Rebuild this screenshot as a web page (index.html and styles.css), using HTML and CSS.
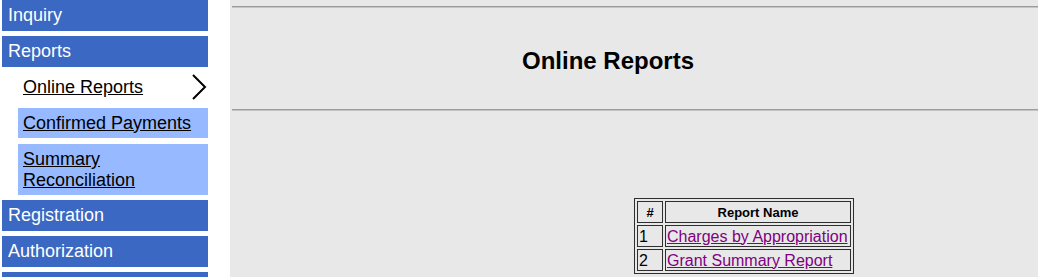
FILE: index.html
```html
<!DOCTYPE html>
<html>
<head>
<meta charset="utf-8">
<title>Online Reports</title>
<link rel="stylesheet" href="styles.css">
</head>
<body>
<div class="page">
  <nav class="sidebar">
    <a class="nav-top" href="#">Inquiry</a>
    <a class="nav-top" href="#">Reports</a>
    <a class="nav-sub active" href="#"><span class="sub-label">Online Reports</span>
      <svg class="chevron" width="16" height="26" viewBox="0 0 16 26"><path d="M2 1 L14 13 L2 25" fill="none" stroke="#000" stroke-width="2"/></svg>
    </a>
    <a class="nav-sub" href="#"><span class="sub-label">Confirmed Payments</span></a>
    <a class="nav-sub tall" href="#"><span class="sub-label">Summary Reconciliation</span></a>
    <a class="nav-top" href="#">Registration</a>
    <a class="nav-top" href="#">Authorization</a>
    <a class="nav-top" href="#"></a>
  </nav>
  <main class="main">
    <hr class="rule">
    <div class="title-block">
      <h1 class="title">Online Reports</h1>
    </div>
    <hr class="rule">
    <div class="report-wrap">
      <table class="reports">
        <tr><th class="num">#</th><th class="name">Report Name</th></tr>
        <tr><td>1</td><td><a href="#">Charges by Appropriation</a></td></tr>
        <tr><td>2</td><td><a href="#">Grant Summary Report</a></td></tr>
      </table>
    </div>
  </main>
</div>
</body>
</html>
```
FILE: styles.css
```css
html, body {
  margin: 0;
  padding: 0;
  height: 100%;
}
body {
  font-family: "Liberation Sans", Arial, sans-serif;
  background: #ffffff;
  overflow: hidden;
}
.page {
  display: grid;
  grid-template-columns: 230px 1fr;
  min-height: 100%;
}
.sidebar {
  display: flex;
  flex-direction: column;
  gap: 5px;
  padding: 0 22px 0 2px;
  background: #ffffff;
}
.nav-top {
  display: block;
  height: 31px;
  min-height: 31px;
  line-height: 31px;
  padding: 0 6px;
  background: #3a68c2;
  color: #ffffff;
  font-size: 18px;
  text-decoration: none;
  box-sizing: border-box;
}
.nav-sub {
  display: flex;
  align-items: center;
  justify-content: space-between;
  margin-left: 16px;
  height: 30px;
  padding: 0 1px 0 5px;
  background: #96b9ff;
  color: #000000;
  font-size: 18px;
  text-decoration: none;
  box-sizing: border-box;
}
.nav-sub + .nav-sub {
  margin-top: 1px;
}
.nav-sub.active {
  background: #ffffff;
}
.sub-label {
  text-decoration: underline;
  line-height: 21px;
}
.nav-sub.tall {
  height: 51px;
  align-items: flex-start;
  padding-top: 5px;
}
.nav-sub.tall .sub-label {
  display: block;
  width: 120px;
}
.chevron {
  display: block;
}
.main {
  background: #e8e8e8;
  padding-left: 2px;
}
.rule {
  margin: 0;
  border: 0;
  border-top: 1px solid #9c9c9c;
  border-bottom: 1px solid #c4c4c4;
  height: 0;
}
.main > .rule:first-child {
  margin-top: 6px;
}
.title-block {
  height: 101px;
  display: flex;
  align-items: flex-start;
  padding-left: 290px;
}
.title {
  margin: 39px 0 0 0;
  font-size: 24px;
  font-weight: bold;
  line-height: 28px;
  color: #000000;
}
.report-wrap {
  padding: 87px 0 0 402px;
}
.reports {
  border: 1px solid #2e2e2e;
  border-spacing: 2px;
  border-collapse: separate;
  font-size: 16px;
}
.reports th, .reports td {
  border: 1px solid #2e2e2e;
  padding: 0 1px;
  height: 20px;
  line-height: 19px;
}
.reports th {
  font-size: 13px;
  font-weight: bold;
  text-align: center;
}
.reports th.num {
  width: 22px;
}
.reports th.name {
  width: 182px;
}
.reports td {
  text-align: left;
}
.reports a {
  color: #800080;
  text-decoration: underline;
}
```
